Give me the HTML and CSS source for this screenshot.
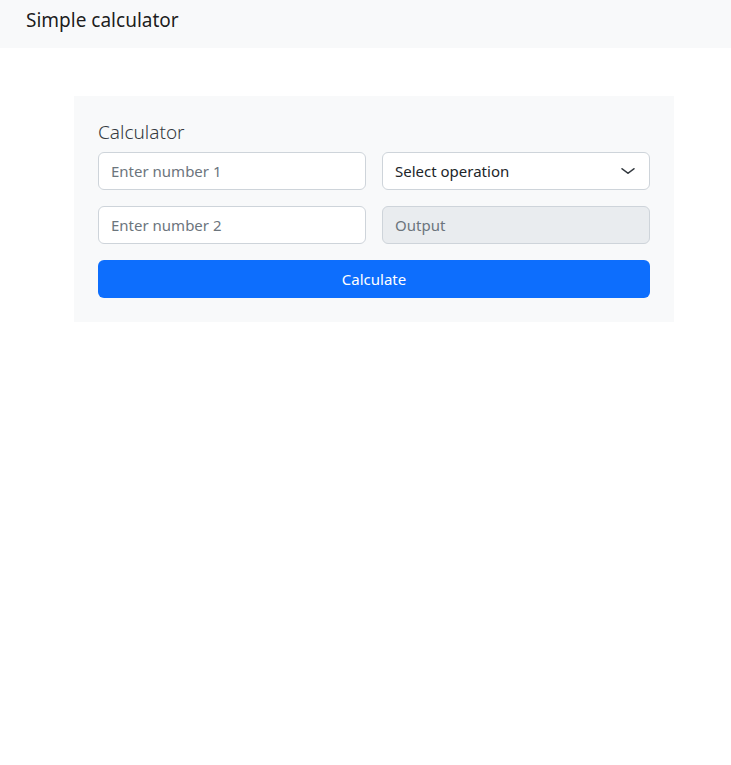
FILE: index.html
```html
<!DOCTYPE html>
<html lang="en">
<head>
<meta charset="utf-8">
<title>Simple calculator</title>
<link rel="stylesheet" href="styles.css">
</head>
<body>
<nav class="navbar">
  <span class="brand">Simple calculator</span>
</nav>
<main class="page">
  <section class="card">
    <h5 class="card-title">Calculator</h5>
    <div class="grid">
      <input class="field" type="text" placeholder="Enter number 1">
      <div class="select-wrap">
        <select class="field select">
          <option>Select operation</option>
          <option>+</option>
          <option>-</option>
          <option>*</option>
          <option>/</option>
        </select>
        <svg class="chev" width="16" height="12" viewBox="0 0 16 16" preserveAspectRatio="none"><path fill="none" stroke="#343a40" stroke-linecap="round" stroke-linejoin="round" stroke-width="1.6" d="m2 5 6 6 6-6"/></svg>
      </div>
      <input class="field" type="text" placeholder="Enter number 2">
      <input class="field disabled" type="text" placeholder="Output" disabled>
    </div>
    <button class="btn" type="button">Calculate</button>
  </section>
</main>
</body>
</html>
```
FILE: styles.css
```css
* { box-sizing: border-box; }
body {
  margin: 0;
  font-family: "Noto Sans", "Open Sans", sans-serif;
  color: #212529;
  background: #fff;
}
.navbar {
  background: #f8f9fa;
  height: 48px;
  display: flex;
  align-items: flex-start;
  padding: 8px 0 0 26px;
}
.brand {
  font-size: 19px;
  color: rgba(0,0,0,0.9);
  line-height: 24px;
}
.page {
  padding: 48px 57px 0 74px;
}
.card {
  width: 600px;
  background: #f8f9fa;
  padding: 24px;
}
.card-title {
  margin: 0 0 8px;
  font-size: 19px;
  font-weight: 300;
  line-height: 24px;
  color: #343a40;
}
.grid {
  display: grid;
  grid-template-columns: 1fr 1fr;
  column-gap: 16px;
  row-gap: 16px;
  margin-bottom: 16px;
}
.field {
  width: 100%;
  height: 38px;
  padding: 6px 12px;
  font-family: inherit;
  font-size: 15px;
  color: #212529;
  background: #fff;
  border: 1px solid #ced4da;
  border-radius: 6px;
  outline: none;
}
.field::placeholder { color: #6c757d; opacity: 1; }
.field.disabled { background: #e9ecef; }
.select-wrap { position: relative; }
.select {
  appearance: none;
  -webkit-appearance: none;
  padding-right: 36px;
}
.chev {
  position: absolute;
  right: 14px;
  top: 13px;
  width: 16px;
  height: 12px;
  pointer-events: none;
}
.btn {
  display: block;
  width: 100%;
  height: 38px;
  border: 0;
  border-radius: 6px;
  background: #0d6efd;
  color: #fff;
  font-family: inherit;
  font-size: 15px;
}
```
